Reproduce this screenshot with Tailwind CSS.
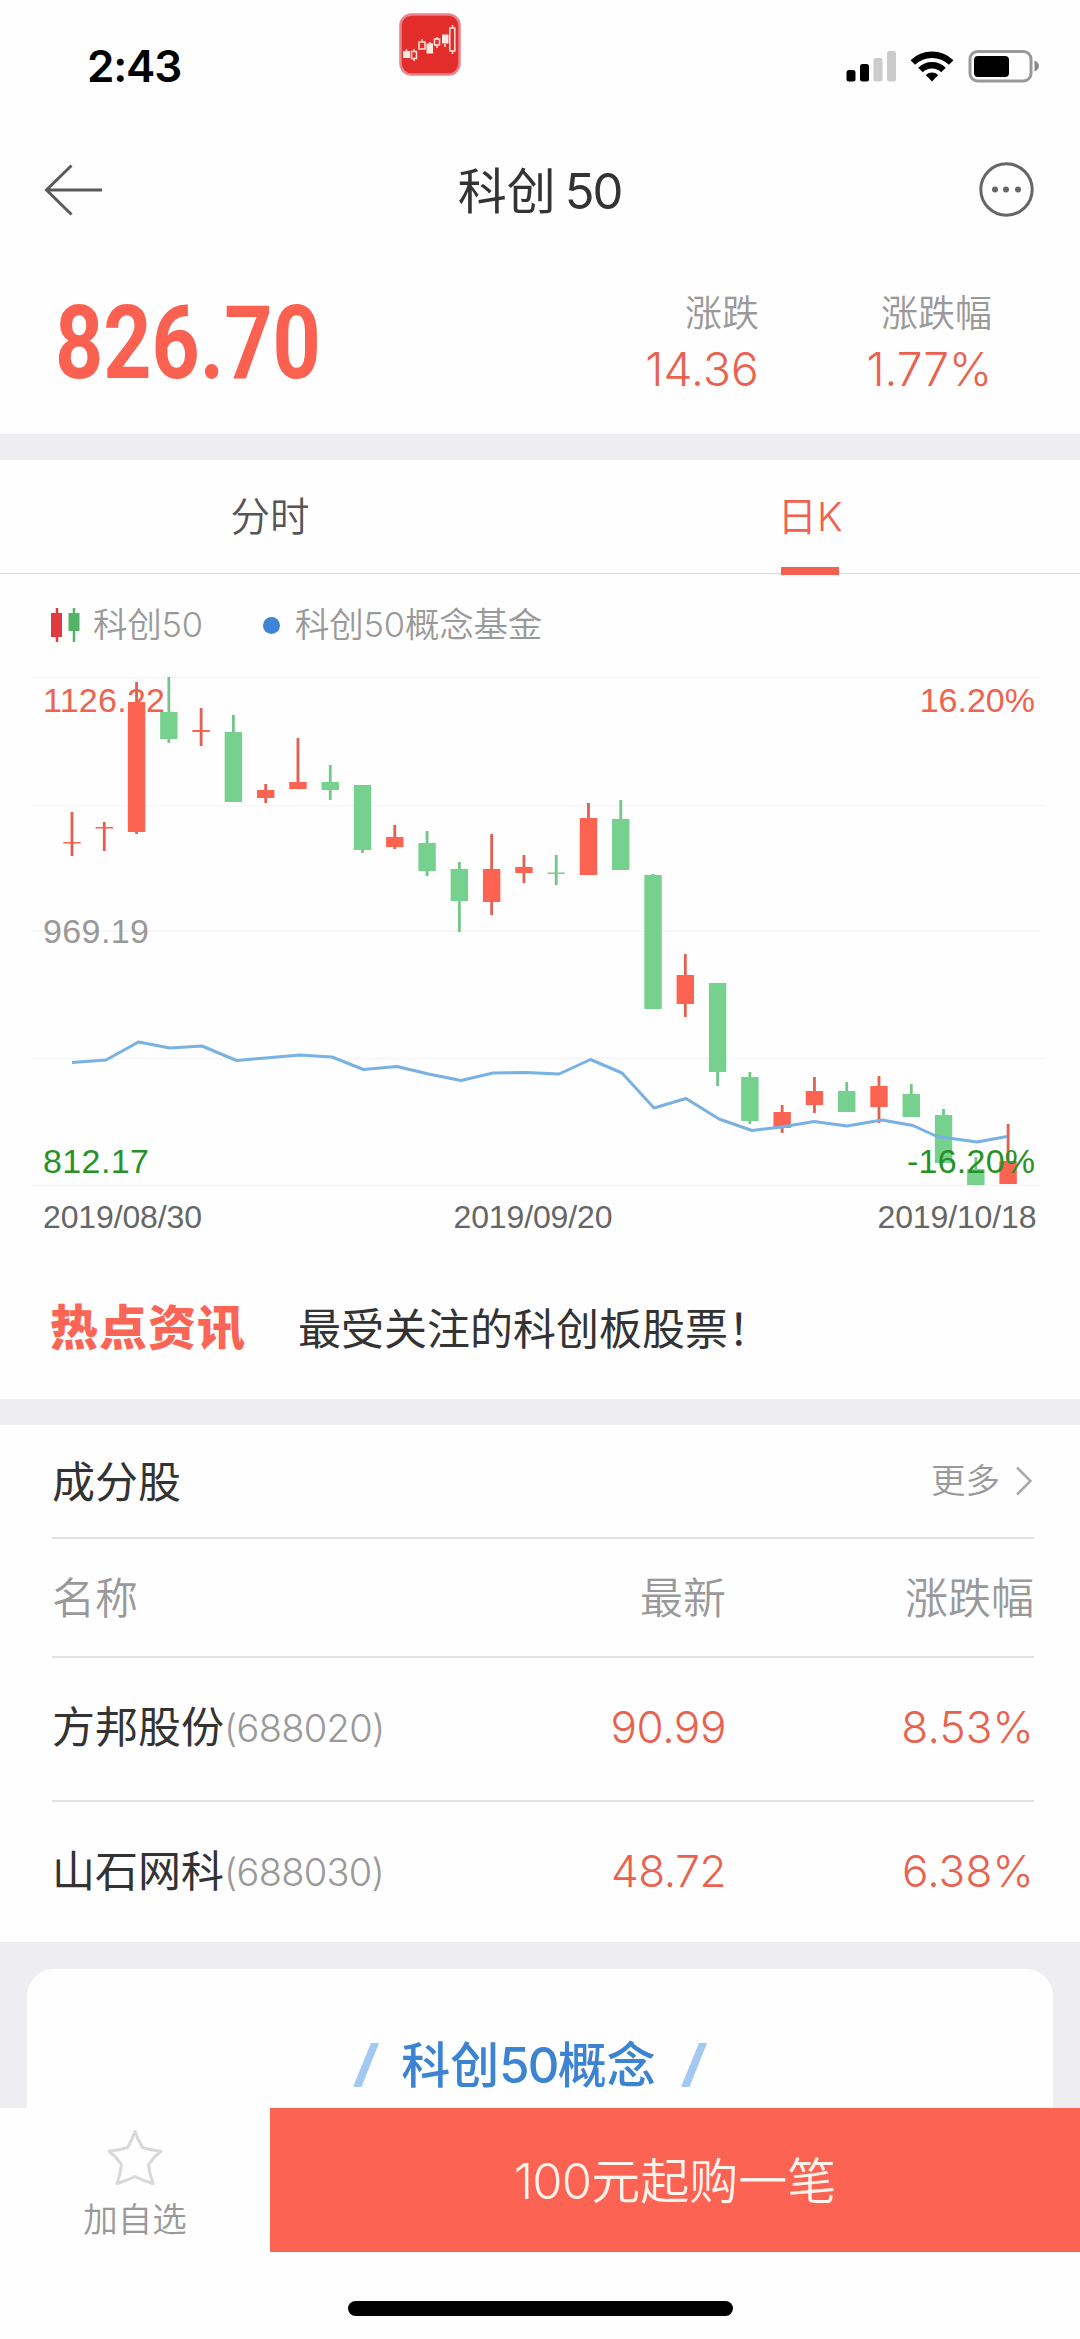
<!DOCTYPE html>
<html lang="zh-CN">
<head>
<meta charset="utf-8">
<title>科创50</title>
<script src="https://cdn.jsdelivr.net/npm/@tailwindcss/browser@4"></script>
</head>
<body class="bg-white">
<div class="w-[1080px] h-[2339px] overflow-hidden flex flex-col bg-[#fefefe] font-['Inter','Noto_Sans_CJK_SC',sans-serif] text-[#333]">

  <!-- Status bar -->
  <header class="h-[130px] shrink-0 flex items-start justify-between pl-[87px] pr-[41px]">
    <div class="w-[312px] mt-[38px] text-[44px] leading-[56px] font-semibold text-black tracking-[-1.2px]">2:43</div>
    <svg class="mt-[13px] mr-auto" width="63" height="63" viewBox="0 0 63 63">
      <rect x="1.5" y="1.5" width="59" height="60" rx="11" fill="#e32d2b" stroke="#e8848a" stroke-width="2.5"/>
      <g stroke="#fde4dc" stroke-width="1.5" fill="none">
        <path d="M7.500 36v3M15 36v3M15 45v3M23 26v3M31 29v3M38 24v3M38 32v3M46 31v3M53.500 12v3M53.500 38v3"/>
        <rect x="12.500" y="38.500" width="5" height="7"/>
        <rect x="20" y="29" width="6" height="7"/>
        <rect x="35.500" y="26" width="5" height="6"/>
        <rect x="50.800" y="15" width="5" height="23"/>
      </g>
      <g fill="#fde9e4"><rect x="4" y="38" width="7" height="7"/><rect x="27.500" y="30.500" width="6.500" height="10"/><rect x="43" y="21.500" width="6.500" height="9"/></g>
    </svg>
    <svg class="mt-[48px]" width="194" height="36" viewBox="845 48 194 36">
      <rect x="846.5" y="70" width="9" height="11.500" rx="2.500"/>
      <rect x="860" y="64" width="9" height="17.500" rx="2.500"/>
      <rect x="873.500" y="58" width="9" height="23.500" rx="2.500" fill="#cbcbcb"/>
      <rect x="887" y="51" width="9" height="30.500" rx="2.500" fill="#cbcbcb"/>
      <g fill="none" stroke="#000" stroke-width="6.500">
        <path d="M912.800 62.500a27.500 27.500 0 0 1 38.400 0" />
        <path d="M920.500 70a16.500 16.500 0 0 1 23 0"/>
      </g>
      <path d="M932 81.500l-6.200-6.400a9 9 0 0 1 12.400 0z"/>
      <rect x="970" y="51.500" width="61" height="29.500" rx="7.500" fill="none" stroke="#999" stroke-width="3"/>
      <rect x="974" y="56" width="35" height="21" rx="4"/>
      <path d="M1034.500 60.500c6 2.500 6 8.500 0 11z" fill="#888"/>
    </svg>
  </header>

  <!-- Navigation bar -->
  <nav class="h-[119px] shrink-0 flex items-center justify-between pl-[43px] pr-[45px]">
    <svg width="61" height="54" viewBox="0 0 61 54" fill="none" stroke="#5a5a5a" stroke-width="3"><path d="M59 27H3M28.500 2.500L3.500 27l25 24.500"/></svg>
    <h1 class="flex items-center gap-[9px] text-[49px] leading-[60px] text-[#333] pt-[4px] pr-[3px]"><span>科创</span><span class="text-[49px] tracking-[-2px]">50</span></h1>
    <svg width="57" height="57" viewBox="0 0 57 57"><circle cx="28.500" cy="28.500" r="25.700" fill="none" stroke="#666" stroke-width="3"/><g fill="#666"><circle cx="17" cy="28.500" r="3"/><circle cx="28" cy="28.500" r="3"/><circle cx="40" cy="28.500" r="3"/></g></svg>
  </nav>

  <!-- Quote -->
  <section class="h-[185px] shrink-0 flex items-start pl-[55px]">
    <div class="w-[539px] mt-[32px]">
      <div class="w-[330px] origin-left scale-x-[0.825] font-['Roboto'] font-bold text-[102px] leading-[124px] text-[#fa6151]">826.70</div>
    </div>
    <div class="w-[165px] mt-[43px] text-right">
      <div class="text-[37px] leading-[44px] text-[#999] font-[350]">涨跌</div>
      <div class="text-[46px] leading-[56px] mt-[5px] text-[#e9624f] font-[350] tracking-[0.2px]">14.36</div>
    </div>
    <div class="w-[233px] mt-[43px] text-right">
      <div class="text-[37px] leading-[44px] text-[#999] font-[350]">涨跌幅</div>
      <div class="text-[46px] leading-[56px] mt-[5px] text-[#e9624f] font-[350] tracking-[-0.1px]">1.77%</div>
    </div>
  </section>
  <div class="h-[26px] shrink-0 bg-[#ededf2]"></div>

  <!-- Tabs -->
  <div class="h-[114px] shrink-0 flex border-b border-[#dadada]">
    <div class="w-1/2 flex justify-center pt-[32px] text-[39.5px] leading-[50px] text-[#555] font-[350]">分时</div>
    <div class="w-1/2 flex flex-col items-center justify-between pt-[32px] text-[39.5px] leading-[50px] text-[#f4604f] font-[350]"><span>日K</span><span class="w-[58px] h-[8px] bg-[#f4604f] -mb-[2px]"></span></div>
  </div>

  <!-- Chart -->
  <div class="h-[102px] shrink-0 flex items-center pl-[50px] text-[34.5px] leading-[44px] text-[#999] font-[350]">
    <svg class="mr-[13px]" width="30" height="36" viewBox="0 0 30 36"><path d="M7 1v34" stroke="#e03a3f" stroke-width="2.500"/><rect x="1" y="6" width="11" height="24" fill="#e03a3f"/><path d="M24 1v34" stroke="#55b367" stroke-width="2.500"/><rect x="18.500" y="6" width="11" height="18" fill="#55b367"/></svg>
    <span class="tracking-[-0.2px]">科创50</span>
    <span class="w-[17px] h-[17px] rounded-full bg-[#3d85d6] ml-[60px] mr-[15px]"></span>
    <span class="tracking-[-0.2px]">科创50概念基金</span>
  </div>
  <svg id="chart" class="shrink-0" width="1080" height="564" viewBox="0 676 1080 564" font-family="Liberation Sans">
    <path d="M32 677.500H1040M32 805.500H1046M32 931H1040M32 1058.500H1046M32 1185.500H1040" stroke="#f7f7f7" stroke-width="2"/>
    <g font-size="34">
      <text x="43" y="712" fill="#ee6350" textLength="122">1126.22</text>
      <text x="1035" y="712" fill="#ee6350" text-anchor="end">16.20%</text>
      <text x="43" y="942.500" fill="#999" textLength="106">969.19</text>
    </g>
    <g id="candles"></g>
    <path fill="none" stroke="#78b1e2" stroke-width="3" stroke-linejoin="round" d="M72 1062.500L106 1060 138.500 1042 170 1048 202 1046 236.500 1060.500 300 1055 332 1057 363.500 1069.500 397 1066.500 428.500 1074 461 1080.500 493 1073 526 1072.500 559 1074 590.500 1059.500 622 1073 654 1108 686 1098.500 719 1119 752 1130.500 782 1127 814 1121.500 847 1126 882 1120 913 1125.500 938 1137 952 1138.500 977 1142 1007 1136.500"/>
    <g font-size="34" fill="#269226">
      <text x="43" y="1173" textLength="106">812.17</text>
      <text x="1035" y="1173" text-anchor="end" textLength="128">-16.20%</text>
    </g>
    <g font-size="32" fill="#666">
      <text x="43" y="1228" textLength="159">2019/08/30</text>
      <text x="453.500" y="1228" textLength="159">2019/09/20</text>
      <text x="877.500" y="1228" textLength="159">2019/10/18</text>
    </g>
  </svg>

  <!-- News -->
  <section class="h-[159px] shrink-0 flex items-center pl-[50px]">
    <div class="w-[248px] pt-[16px] text-[48px] leading-[60px] font-black text-[#fb6555] tracking-[1px]">热点资讯</div>
    <div class="text-[43px] leading-[60px] pt-[18px]">最受关注的科创板股票！</div>
  </section>
  <div class="h-[26px] shrink-0 bg-[#ededf2]"></div>

  <!-- Constituents -->
  <section class="h-[517px] shrink-0 pl-[52px] pr-[46px] text-[43px]">
    <div class="h-[114px] flex items-center justify-between border-b-2 border-[#e2e2e2]">
      <h2 class="leading-[60px] pt-[2px]">成分股</h2>
      <div class="flex items-center text-[34.5px] leading-[48px] text-[#999] font-[350]">更多<svg class="ml-[15px] mr-px" width="18" height="30" viewBox="0 0 18 30" fill="none" stroke="#aaa" stroke-width="2.500"><path d="M2 1.500L15.500 15 2 28.500"/></svg></div>
    </div>
    <div class="h-[117px] flex items-center text-[#999] font-[350] leading-[60px]">
      <span class="w-[374px]">名称</span><span class="w-[300px] text-right">最新</span><span class="flex-1 text-right">涨跌幅</span>
    </div>
    <div class="h-[144px] flex items-center border-t-2 border-[#e2e2e2] leading-[60px] pb-[4px]">
      <span class="w-[374px] flex items-center whitespace-nowrap">方邦股份<span class="text-[38px] text-[#999] font-[350] tracking-[-0.7px] pt-[2px]">(688020)</span></span><span class="w-[300px] text-right text-[44px] text-[#e9624f] font-[350] tracking-[-0.4px]">90.99</span><span class="flex-1 text-right text-[44px] text-[#e9624f] font-[350] tracking-[0.2px]">8.53%</span>
    </div>
    <div class="h-[142px] flex items-center border-t-2 border-[#e2e2e2] leading-[60px] pb-[3px]">
      <span class="w-[374px] flex items-center whitespace-nowrap">山石网科<span class="text-[38px] text-[#999] font-[350] tracking-[-0.7px] pt-[2px]">(688030)</span></span><span class="w-[300px] text-right text-[44px] text-[#e9624f] font-[350] tracking-[-0.4px]">48.72</span><span class="flex-1 text-right text-[44px] text-[#e9624f] font-[350] tracking-[0.2px]">6.38%</span>
    </div>
  </section>

  <!-- Concept card -->
  <section class="h-[166px] shrink-0 bg-[#ededf2] px-[27px] pt-[27px]">
    <div class="h-full bg-[#fefefe] rounded-t-[27px] flex justify-center pt-[67px] pr-[20px]">
      <svg class="mt-[7px]" width="26" height="44" viewBox="0 0 26 44"><path d="M18 0h8L8.500 44H0z" fill="#a3c8f2"/></svg>
      <h2 class="ml-[22px] mr-[25px] text-[49px] leading-[60px] font-medium text-[#3c83d2] whitespace-nowrap">科创<span class="tracking-[-1.8px]">50</span>概念</h2>
      <svg class="mt-[7px]" width="26" height="44" viewBox="0 0 26 44"><path d="M18 0h8L8.500 44H0z" fill="#a3c8f2"/></svg>
    </div>
  </section>

  <!-- Bottom bar -->
  <footer class="shrink-0 h-[231px] flex flex-col">
    <div class="h-[144px] flex">
      <div class="w-[270px] flex flex-col items-center pt-[20px]">
        <svg width="58" height="60" viewBox="0 0 58 60" fill="none" stroke="#d8d8d8" stroke-width="3" stroke-linejoin="round"><path d="M29 3.500Q32 12 36.500 19.500Q45 22.500 55 23.200Q48 28.500 42.500 36.500Q43.500 46 47 55.500Q38 53 29 48.500Q20 53 11 55.500Q14.500 46 15.500 36.500Q10 28.500 3 23.200Q13 22.500 21.500 19.500Q26 12 29 3.500z"/></svg>
        <span class="mt-[10px] text-[34.5px] leading-[44px] text-[#999] font-[350]">加自选</span>
      </div>
      <div class="flex-1 bg-[#fc6352] flex items-center justify-center pt-[3px] text-[49px] leading-[60px] text-[#fff3ec] font-[350]"><span class="tracking-[-0.8px]">100</span><span>元起购一笔</span></div>
    </div>
    <div class="w-[385px] h-[15px] rounded-full bg-black mt-[49px] ml-[348px]"></div>
  </footer>
</div>
<script>
  // Each candle: [direction, high, body top, body bottom, low]
  const candles = [
    ['r',812,842,843.5,856],['r',822,827,828.5,851],['r',682,702,832,834],['g',677,712,739,743],['r',708,730,732,746],
    ['g',715,732,802,802],['r',784,790,798,803],['r',738,782,789,789],['g',765,782,790,800],['g',785,785,850,853],
    ['r',825,837,847,849],['g',831,843,871,876],['g',862,869,901,932],['r',834,869,902,915],['r',855,867,873,883],
    ['g',855,872.5,874,885],['r',803,818,875,875],['g',800,819,870,870],['g',874,875,1009,1009],['r',954,975,1004,1017],
    ['g',983,983,1072,1086],['g',1072,1077,1121,1124],['r',1105,1112,1128,1133],['r',1077,1091,1105,1113],['g',1082,1091,1112,1112],
    ['r',1076,1086,1107,1123],['g',1084,1094,1117,1117],['g',1109,1115,1163,1163],['g',1157,1169,1185,1185],['r',1124,1161,1184,1184]
  ];
  document.getElementById('candles').innerHTML = candles.map(([d, hi, top, bottom, lo], i) => {
    const x = 72 + i * 32.28, body = d === 'r' ? '#fc6350' : '#76d18f', wick = d === 'r' ? '#e2604f' : '#70c788';
    return `<rect x="${x - 1.4}" y="${hi}" width="2.8" height="${lo - hi}" fill="${wick}"/><rect x="${x - 8.7}" y="${top}" width="17.4" height="${bottom - top}" fill="${body}"/>`;
  }).join('');
</script>
</body>
</html>
